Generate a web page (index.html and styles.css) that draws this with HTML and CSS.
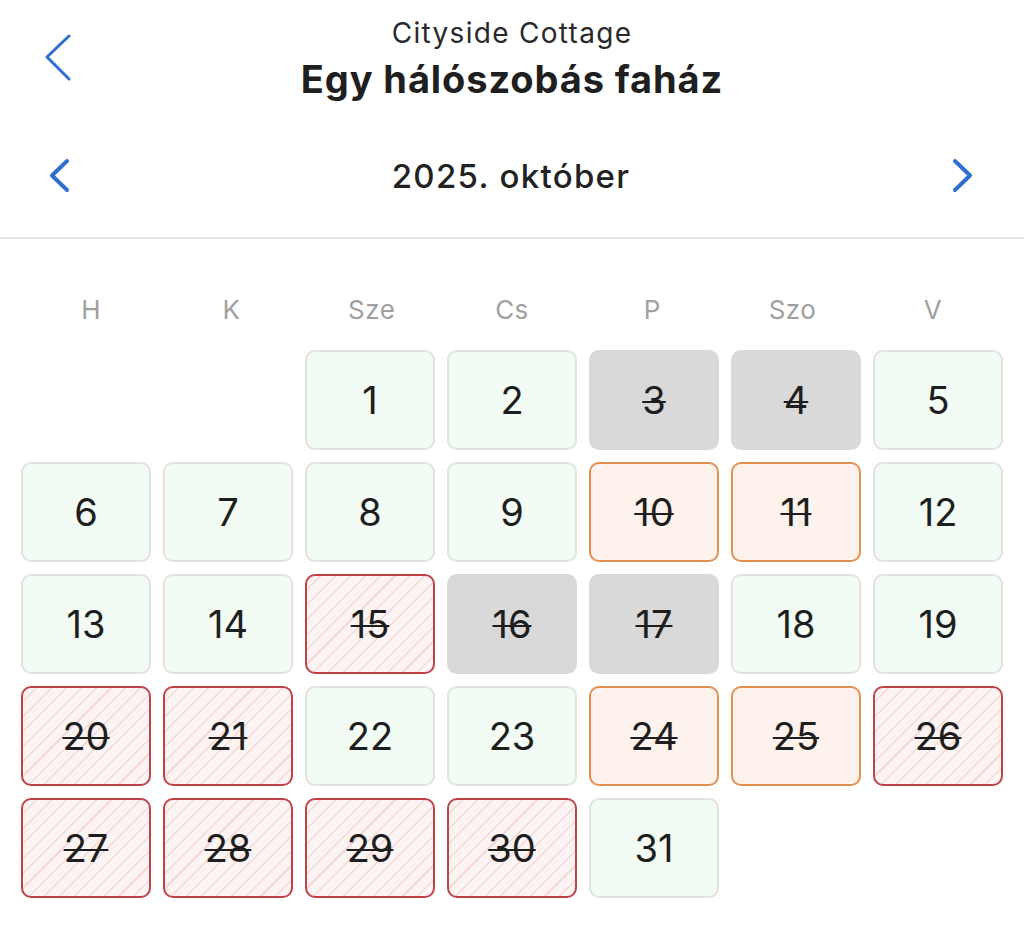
FILE: index.html
```html
<!DOCTYPE html>
<html lang="hu">
<head>
    <meta charset="UTF-8">
    <meta name="viewport" content="width=device-width, initial-scale=1.0">
    <title>Egy hálószobás faház</title>
    <link rel="stylesheet" href="styles.css">
</head>
<body>

<header class="topbar">
    <button class="back-btn" aria-label="Vissza">
        <svg width="28" height="48" viewBox="0 0 28 48"><path d="M25 2 L3 23 L25 45" /></svg>
    </button>
    <div class="titles">
        <div class="subtitle">Cityside Cottage</div>
        <h1 class="title">Egy hálószobás faház</h1>
    </div>
    <div></div>
</header>

<div class="month-row">
    <button class="nav-btn" aria-label="Előző hónap">
        <svg width="22" height="36" viewBox="0 0 22 36"><path d="M18 3 L3 17.5 L18 32" /></svg>
    </button>
    <div class="month">2025. október</div>
    <button class="nav-btn" aria-label="Következő hónap">
        <svg width="22" height="36" viewBox="0 0 22 36"><path d="M4 3 L19 17.5 L4 32" /></svg>
    </button>
</div>

<div class="calendar">
    <div class="weekdays">
        <span>H</span><span>K</span><span>Sze</span><span>Cs</span><span>P</span><span>Szo</span><span>V</span>
    </div>

    <div class="days">
        <div class="day free first">1</div>
        <div class="day free">2</div>
        <div class="day closed">3</div>
        <div class="day closed">4</div>
        <div class="day free">5</div>

        <div class="day free">6</div>
        <div class="day free">7</div>
        <div class="day free">8</div>
        <div class="day free">9</div>
        <div class="day pending">10</div>
        <div class="day pending">11</div>
        <div class="day free">12</div>

        <div class="day free">13</div>
        <div class="day free">14</div>
        <div class="day booked">15</div>
        <div class="day closed">16</div>
        <div class="day closed">17</div>
        <div class="day free">18</div>
        <div class="day free">19</div>

        <div class="day booked">20</div>
        <div class="day booked">21</div>
        <div class="day free">22</div>
        <div class="day free">23</div>
        <div class="day pending">24</div>
        <div class="day pending">25</div>
        <div class="day booked">26</div>

        <div class="day booked">27</div>
        <div class="day booked">28</div>
        <div class="day booked">29</div>
        <div class="day booked">30</div>
        <div class="day free">31</div>
    </div>
</div>

</body>
</html>
```

FILE: styles.css
```css
* {
    box-sizing: border-box;
    margin: 0;
    padding: 0;
}
body {
    font-family: Inter, "Noto Sans", Arial, sans-serif;
    background: #fff;
    color: #222;
    width: 1024px;
}
button {
    background: none;
    border: none;
    cursor: pointer;
    display: flex;
    align-items: center;
}
svg path {
    fill: none;
    stroke: #2f6fcf;
    stroke-linecap: round;
    stroke-linejoin: round;
}
.topbar {
    display: grid;
    grid-template-columns: 1fr auto 1fr;
    align-items: center;
    padding-top: 16px;
}
.back-btn {
    padding-left: 44px;
}
.back-btn svg path {
    stroke-width: 3;
}
.titles {
    text-align: center;
}
.subtitle {
    font-size: 28px;
    line-height: 34px;
    letter-spacing: 1.3px;
    color: #2a2a2a;
}
.title {
    font-size: 38px;
    line-height: 42px;
    font-weight: 700;
    color: #1f1f1f;
    margin-top: 8px;
    letter-spacing: 0.9px;
}
.month-row {
    display: flex;
    align-items: center;
    justify-content: space-between;
    height: 48px;
    margin-top: 52px;
    padding: 0 51px 0 49px;
}
.month-row + .calendar {
    border-top: 2px solid #e6e6e6;
    margin-top: 37px;
}
.nav-btn svg path {
    stroke-width: 4;
}
.month {
    font-size: 33px;
    font-weight: 500;
    letter-spacing: 1.3px;
    color: #222;
}
.calendar {
    padding: 0 21px;
}
.weekdays {
    display: grid;
    grid-template-columns: repeat(7, 1fr);
    margin-top: 55px;
    text-align: center;
    font-size: 26px;
    line-height: 32px;
    letter-spacing: 0.5px;
    color: #a0a0a0;
}
.days {
    display: grid;
    grid-template-columns: repeat(7, 130px);
    grid-auto-rows: 100px;
    gap: 12px;
    margin-top: 24px;
}
.day {
    display: flex;
    align-items: center;
    justify-content: center;
    border-radius: 10px;
    border: 2px solid #e1e3e1;
    background: #f2fbf4;
    font-size: 38px;
    color: #1e1e1e;
}
.first {
    grid-column-start: 3;
}
.closed, .pending, .booked {
    text-decoration: line-through;
    text-decoration-thickness: 2px;
}
.closed {
    background: #d9d9d9;
    border-color: #d9d9d9;
}
.pending {
    background: #fdf3ec;
    border-color: #e3904f;
}
.booked {
    border-color: #bf4247;
    background-color: #fcf3f3;
    background-image: repeating-linear-gradient(135deg, #fcf3f3 0, #fcf3f3 9px, #f4d8da 9px, #f4d8da 10.5px);
}
```
